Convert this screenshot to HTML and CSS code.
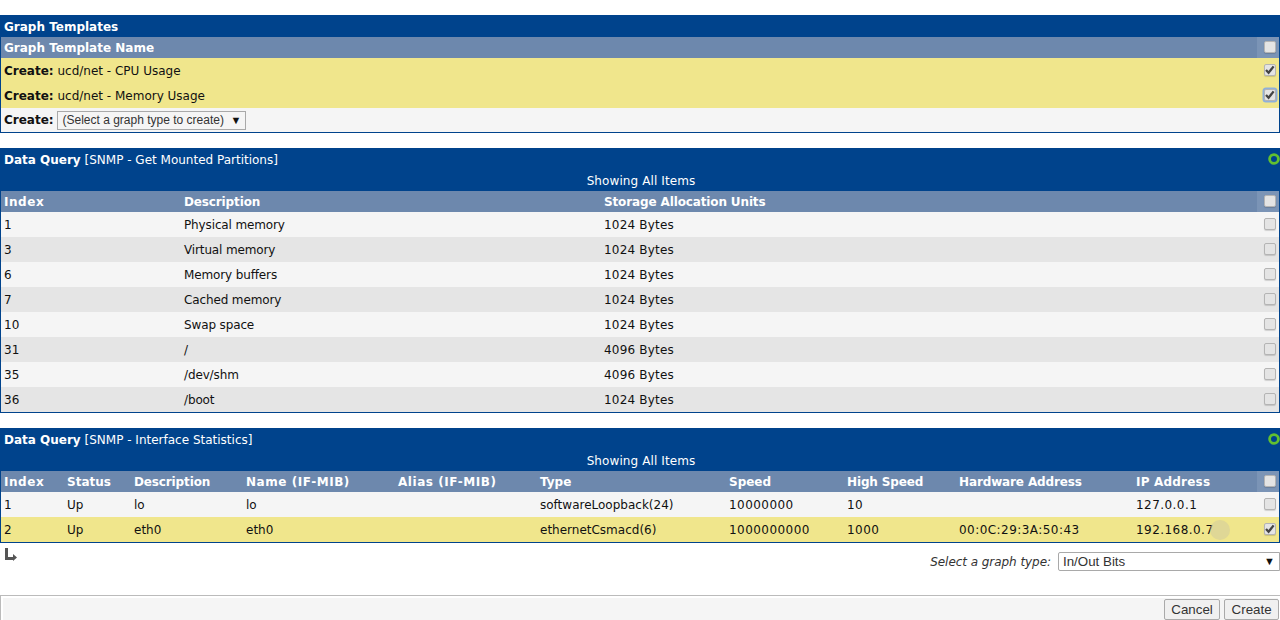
FILE: index.html
```html
<!doctype html>
<html lang="en">
<head>
  <meta charset="UTF-8" />
  <title>Console - Graph Management</title>
  <link rel="stylesheet" href="styles.css">
</head>
<body>
  <svg class="icon-defs" width="0" height="0">
    <symbol id="tick" viewBox="0 0 10 10">
      <path d="M1 5 L3.6 7.8 L8.6 1.4" fill="none" stroke="#444" stroke-width="2.3" />
    </symbol>
  </svg>

  <div class="panel">
    <div class="panel-title"><span><b>Graph Templates</b></span></div>
    <table class="list">
      <tr class="head">
        <th>Graph Template Name</th>
        <th class="check-col"><span class="check"></span></th>
      </tr>
      <tr class="picked">
        <td><b>Create:</b> ucd/net - CPU Usage</td>
        <td class="check-col"><span class="check"><svg><use href="#tick" /></svg></span></td>
      </tr>
      <tr class="picked">
        <td><b>Create:</b> ucd/net - Memory Usage</td>
        <td class="check-col"><span class="check focus"><svg><use href="#tick" /></svg></span></td>
      </tr>
      <tr class="create-row">
        <td colspan="2"><b>Create:</b>
          <span class="fake-select small">(Select a graph type to create)<i class="caret">▼</i></span>
        </td>
      </tr>
    </table>
  </div>

  <div class="panel">
    <div class="panel-title">
      <span><b>Data Query</b> [SNMP - Get Mounted Partitions]</span>
      <svg class="reload" width="14" height="14"><circle cx="7" cy="7" r="4.4" fill="none" stroke="#62c030" stroke-width="2.8" /></svg>
    </div>
    <div class="panel-sub">Showing All Items</div>
    <table class="list fixed">
      <colgroup>
        <col class="p1" /><col class="p2" /><col />
        <col class="check-width" />
      </colgroup>
      <tr class="head">
        <th class="wide-i">Index</th><th class="tight">Description</th><th class="tight">Storage Allocation Units</th>
        <th class="check-col"><span class="check"></span></th>
      </tr>
      <tr class="odd"><td>1</td><td class="tight">Physical memory</td><td class="units">1024 Bytes</td><td class="check-col"><span class="check"></span></td></tr>
      <tr class="even"><td>3</td><td class="tight">Virtual memory</td><td class="units">1024 Bytes</td><td class="check-col"><span class="check"></span></td></tr>
      <tr class="odd"><td>6</td><td class="tight">Memory buffers</td><td class="units">1024 Bytes</td><td class="check-col"><span class="check"></span></td></tr>
      <tr class="even"><td>7</td><td class="tight">Cached memory</td><td class="units">1024 Bytes</td><td class="check-col"><span class="check"></span></td></tr>
      <tr class="odd"><td>10</td><td class="tight">Swap space</td><td class="units">1024 Bytes</td><td class="check-col"><span class="check"></span></td></tr>
      <tr class="even"><td>31</td><td class="tight">/</td><td class="units">4096 Bytes</td><td class="check-col"><span class="check"></span></td></tr>
      <tr class="odd"><td>35</td><td class="tight">/dev/shm</td><td class="units">4096 Bytes</td><td class="check-col"><span class="check"></span></td></tr>
      <tr class="even"><td>36</td><td class="tight">/boot</td><td class="units">1024 Bytes</td><td class="check-col"><span class="check"></span></td></tr>
    </table>
  </div>

  <div class="panel last">
    <div class="panel-title">
      <span><b>Data Query</b> [SNMP - Interface Statistics]</span>
      <svg class="reload" width="14" height="14"><circle cx="7" cy="7" r="4.4" fill="none" stroke="#62c030" stroke-width="2.8" /></svg>
    </div>
    <div class="panel-sub">Showing All Items</div>
    <table class="list fixed">
      <colgroup>
        <col class="c1" /><col class="c2" /><col class="c3" /><col class="c4" /><col class="c5" />
        <col class="c6" /><col class="c7" /><col class="c8" /><col class="c9" /><col />
        <col class="check-width" />
      </colgroup>
      <tr class="head">
        <th class="wide-i">Index</th><th>Status</th><th class="tight">Description</th><th class="wide-i">Name (IF-MIB)</th><th class="wide-i">Alias (IF-MIB)</th>
        <th>Type</th><th>Speed</th><th class="tight">High Speed</th><th class="tight">Hardware Address</th><th class="units">IP Address</th>
        <th class="check-col"><span class="check"></span></th>
      </tr>
      <tr class="odd">
        <td>1</td><td>Up</td><td>lo</td><td>lo</td><td></td>
        <td>softwareLoopback(24)</td><td class="num">10000000</td><td class="num">10</td><td></td><td class="num">127.0.0.1</td>
        <td class="check-col"><span class="check"></span></td>
      </tr>
      <tr class="picked">
        <td>2</td><td>Up</td><td>eth0</td><td>eth0</td><td></td>
        <td>ethernetCsmacd(6)</td><td class="num">1000000000</td><td class="num">1000</td><td class="num">00:0C:29:3A:50:43</td>
        <td class="ip-cell num">192.168.0.7<span class="cursor-spot"></span></td>
        <td class="check-col"><span class="check"><svg><use href="#tick" /></svg></span></td>
      </tr>
    </table>
  </div>

  <div class="after-table">
    <svg class="down-arrow" width="14" height="15" viewBox="0 0 14 15">
      <path d="M1 1 H4 V10 H9 V7 L13 10.5 L9 14 V13 H1 Z" fill="#555" />
    </svg>
    <div class="graph-type">
      <em>Select a graph type:</em>
      <span class="fake-select wide">In/Out Bits<i class="caret">▼</i></span>
    </div>
  </div>

  <div class="save-bar">
    <button type="button">Cancel</button>
    <button type="button">Create</button>
  </div>
</body>
</html>
```

FILE: styles.css
```css
* {
  box-sizing: border-box;
}

body {
  margin: 0;
  padding-top: 15px;
  background: #fff;
  font-family: 'DejaVu Sans', Verdana, sans-serif;
  font-size: 12px;
  color: #111;
}

.icon-defs {
  display: block;
  height: 0;
}

.panel {
  border: 1px solid #00438c;
  border-top: none;
  margin-bottom: 15px;
}

.panel.last {
  margin-bottom: 0;
}

.panel-title {
  display: flex;
  justify-content: space-between;
  align-items: center;
  height: 22px;
  padding: 0 0 0 3px;
  background: #00438c;
  color: #fff;
}

.panel-title span {
  padding-top: 1px;
}

.panel-sub {
  height: 21px;
  padding: 1px 0 0 2px;
  line-height: 20px;
  background: #00438c;
  color: #fff;
  text-align: center;
  letter-spacing: 0.1px;
}

.reload {
  margin-right: -2px;
}

.list {
  width: 100%;
  border-collapse: collapse;
  border-spacing: 0;
}

.fixed {
  table-layout: fixed;
}

.list th,
.list td {
  padding: 0 0 0 3px;
  text-align: left;
  white-space: nowrap;
}

.head th {
  height: 21px;
  background: #6d88ad;
  color: #fff;
}

.head .wide-i {
  letter-spacing: 0.55px;
}

.list td {
  height: 25px;
}

.list .create-row td {
  height: 24px;
}

.odd td,
.create-row td {
  background: #f5f5f5;
}

.even td {
  background: #e5e5e5;
}

.picked td {
  background: #f0e68c;
}

.tight {
  letter-spacing: -0.13px;
}

.units {
  letter-spacing: 0.2px;
}

.num {
  letter-spacing: 0.45px;
}

.list .head .check-col {
  background: #7b94b6;
}

.list .check-col {
  width: 22px;
  padding: 0 0 0 4px;
  text-align: center;
}

.check-width { width: 22px; }

.p1 { width: 180px; }
.p2 { width: 420px; }

.c1 { width: 63px; }
.c2 { width: 67px; }
.c3 { width: 112px; }
.c4 { width: 152px; }
.c5 { width: 142px; }
.c6 { width: 189px; }
.c7 { width: 118px; }
.c8 { width: 112px; }
.c9 { width: 177px; }

.check {
  display: inline-block;
  width: 12px;
  height: 12px;
  margin-bottom: 2px;
  vertical-align: middle;
  background: #e4e4e4;
  border: 1px solid #b4b4b4;
  border-radius: 2px;
  box-shadow: 0 1px 1px rgba(0, 0, 0, 0.15);
}

.check svg {
  display: block;
  width: 10px;
  height: 10px;
}

.check.focus {
  box-shadow: 0 0 0 1.5px #8fb0da;
}

.fake-select {
  position: relative;
  display: inline-block;
  height: 19px;
  line-height: 17px;
  padding-left: 4px;
  background: #fff;
  border: 1px solid #a9a9a9;
  font-family: 'Liberation Sans', Arial, sans-serif;
  color: #333;
  vertical-align: middle;
}

.small {
  width: 189px;
  background: #f5f5f5;
  font-size: 12px;
}

.wide {
  width: 222px;
  font-size: 13.33px;
  border-radius: 2px 0 0 2px;
}

.caret {
  position: absolute;
  right: 4px;
  top: 0;
  font-style: normal;
  font-size: 11px;
  color: #111;
}

.ip-cell {
  position: relative;
}

.cursor-spot {
  position: absolute;
  left: 77px;
  top: 3px;
  width: 20px;
  height: 20px;
  border-radius: 50%;
  background: rgba(205, 200, 160, 0.5);
}

.after-table {
  display: flex;
  justify-content: space-between;
  align-items: flex-start;
  height: 52px;
  padding: 0 0 0 4px;
}

.down-arrow {
  margin-top: 4px;
}

.graph-type {
  display: flex;
  align-items: center;
  gap: 7px;
  margin-top: 9px;
}

.graph-type em {
  color: #333;
  letter-spacing: -0.05px;
}

.save-bar {
  display: flex;
  justify-content: flex-end;
  gap: 4px;
  height: 30px;
  padding: 3px 1px 0 0;
  background: #f5f5f5;
  border: 1px solid #bbb;
  border-right: none;
  box-shadow: inset 0 0 0 2px #fff;
}

.save-bar button {
  height: 21px;
  padding: 0 6.4px;
  background: #f0f0f0;
  border: 1px solid #aaa;
  border-radius: 2px;
  font-family: 'Liberation Sans', Arial, sans-serif;
  font-size: 13.33px;
  line-height: 18px;
  color: #333;
}
```
